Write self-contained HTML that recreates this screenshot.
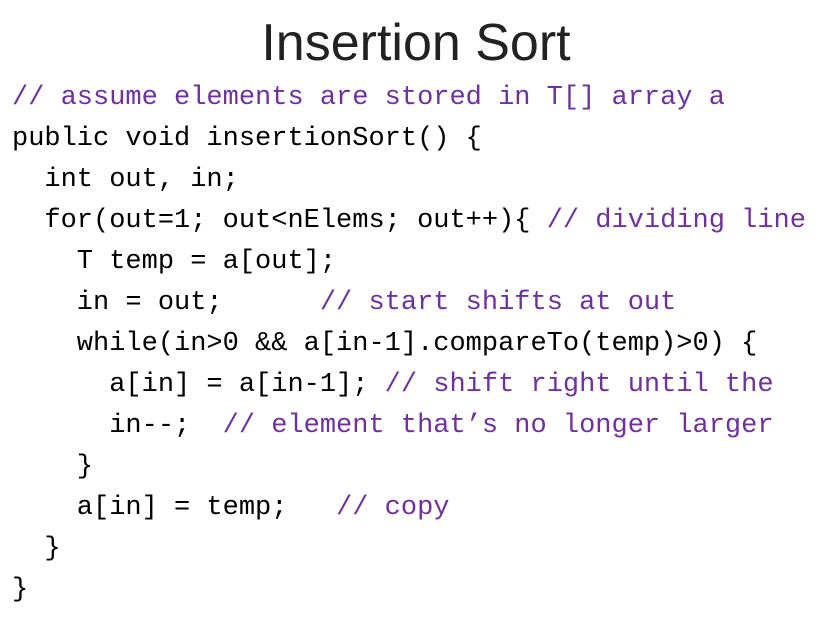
<!DOCTYPE html>
<html><head><meta charset="utf-8"><style>
body{margin:0;width:825px;height:617px;background:#fff;overflow:hidden;position:relative}
h1{position:absolute;left:0;width:832px;top:13px;margin:0;text-align:center;font-family:"Liberation Sans",sans-serif;font-weight:normal;font-size:52px;color:#222;letter-spacing:0px}
pre{position:absolute;left:12px;top:78px;margin:0;font-family:"Liberation Mono",monospace;font-size:27px;line-height:41px;color:#000}
.c{color:#7030a0}
</style></head><body>
<h1>Insertion Sort</h1>
<pre><span class="c">// assume elements are stored in T[] array a</span>
public void insertionSort() {
  int out, in;
  for(out=1; out&lt;nElems; out++){ <span class="c">// dividing line</span>
    T temp = a[out];
    in = out;      <span class="c">// start shifts at out</span>
    while(in&gt;0 &amp;&amp; a[in-1].compareTo(temp)&gt;0) {
      a[in] = a[in-1]; <span class="c">// shift right until the</span>
      in--;  <span class="c">// element that’s no longer larger</span>
    }
    a[in] = temp;   <span class="c">// copy</span>
  }
}</pre>
</body></html>
